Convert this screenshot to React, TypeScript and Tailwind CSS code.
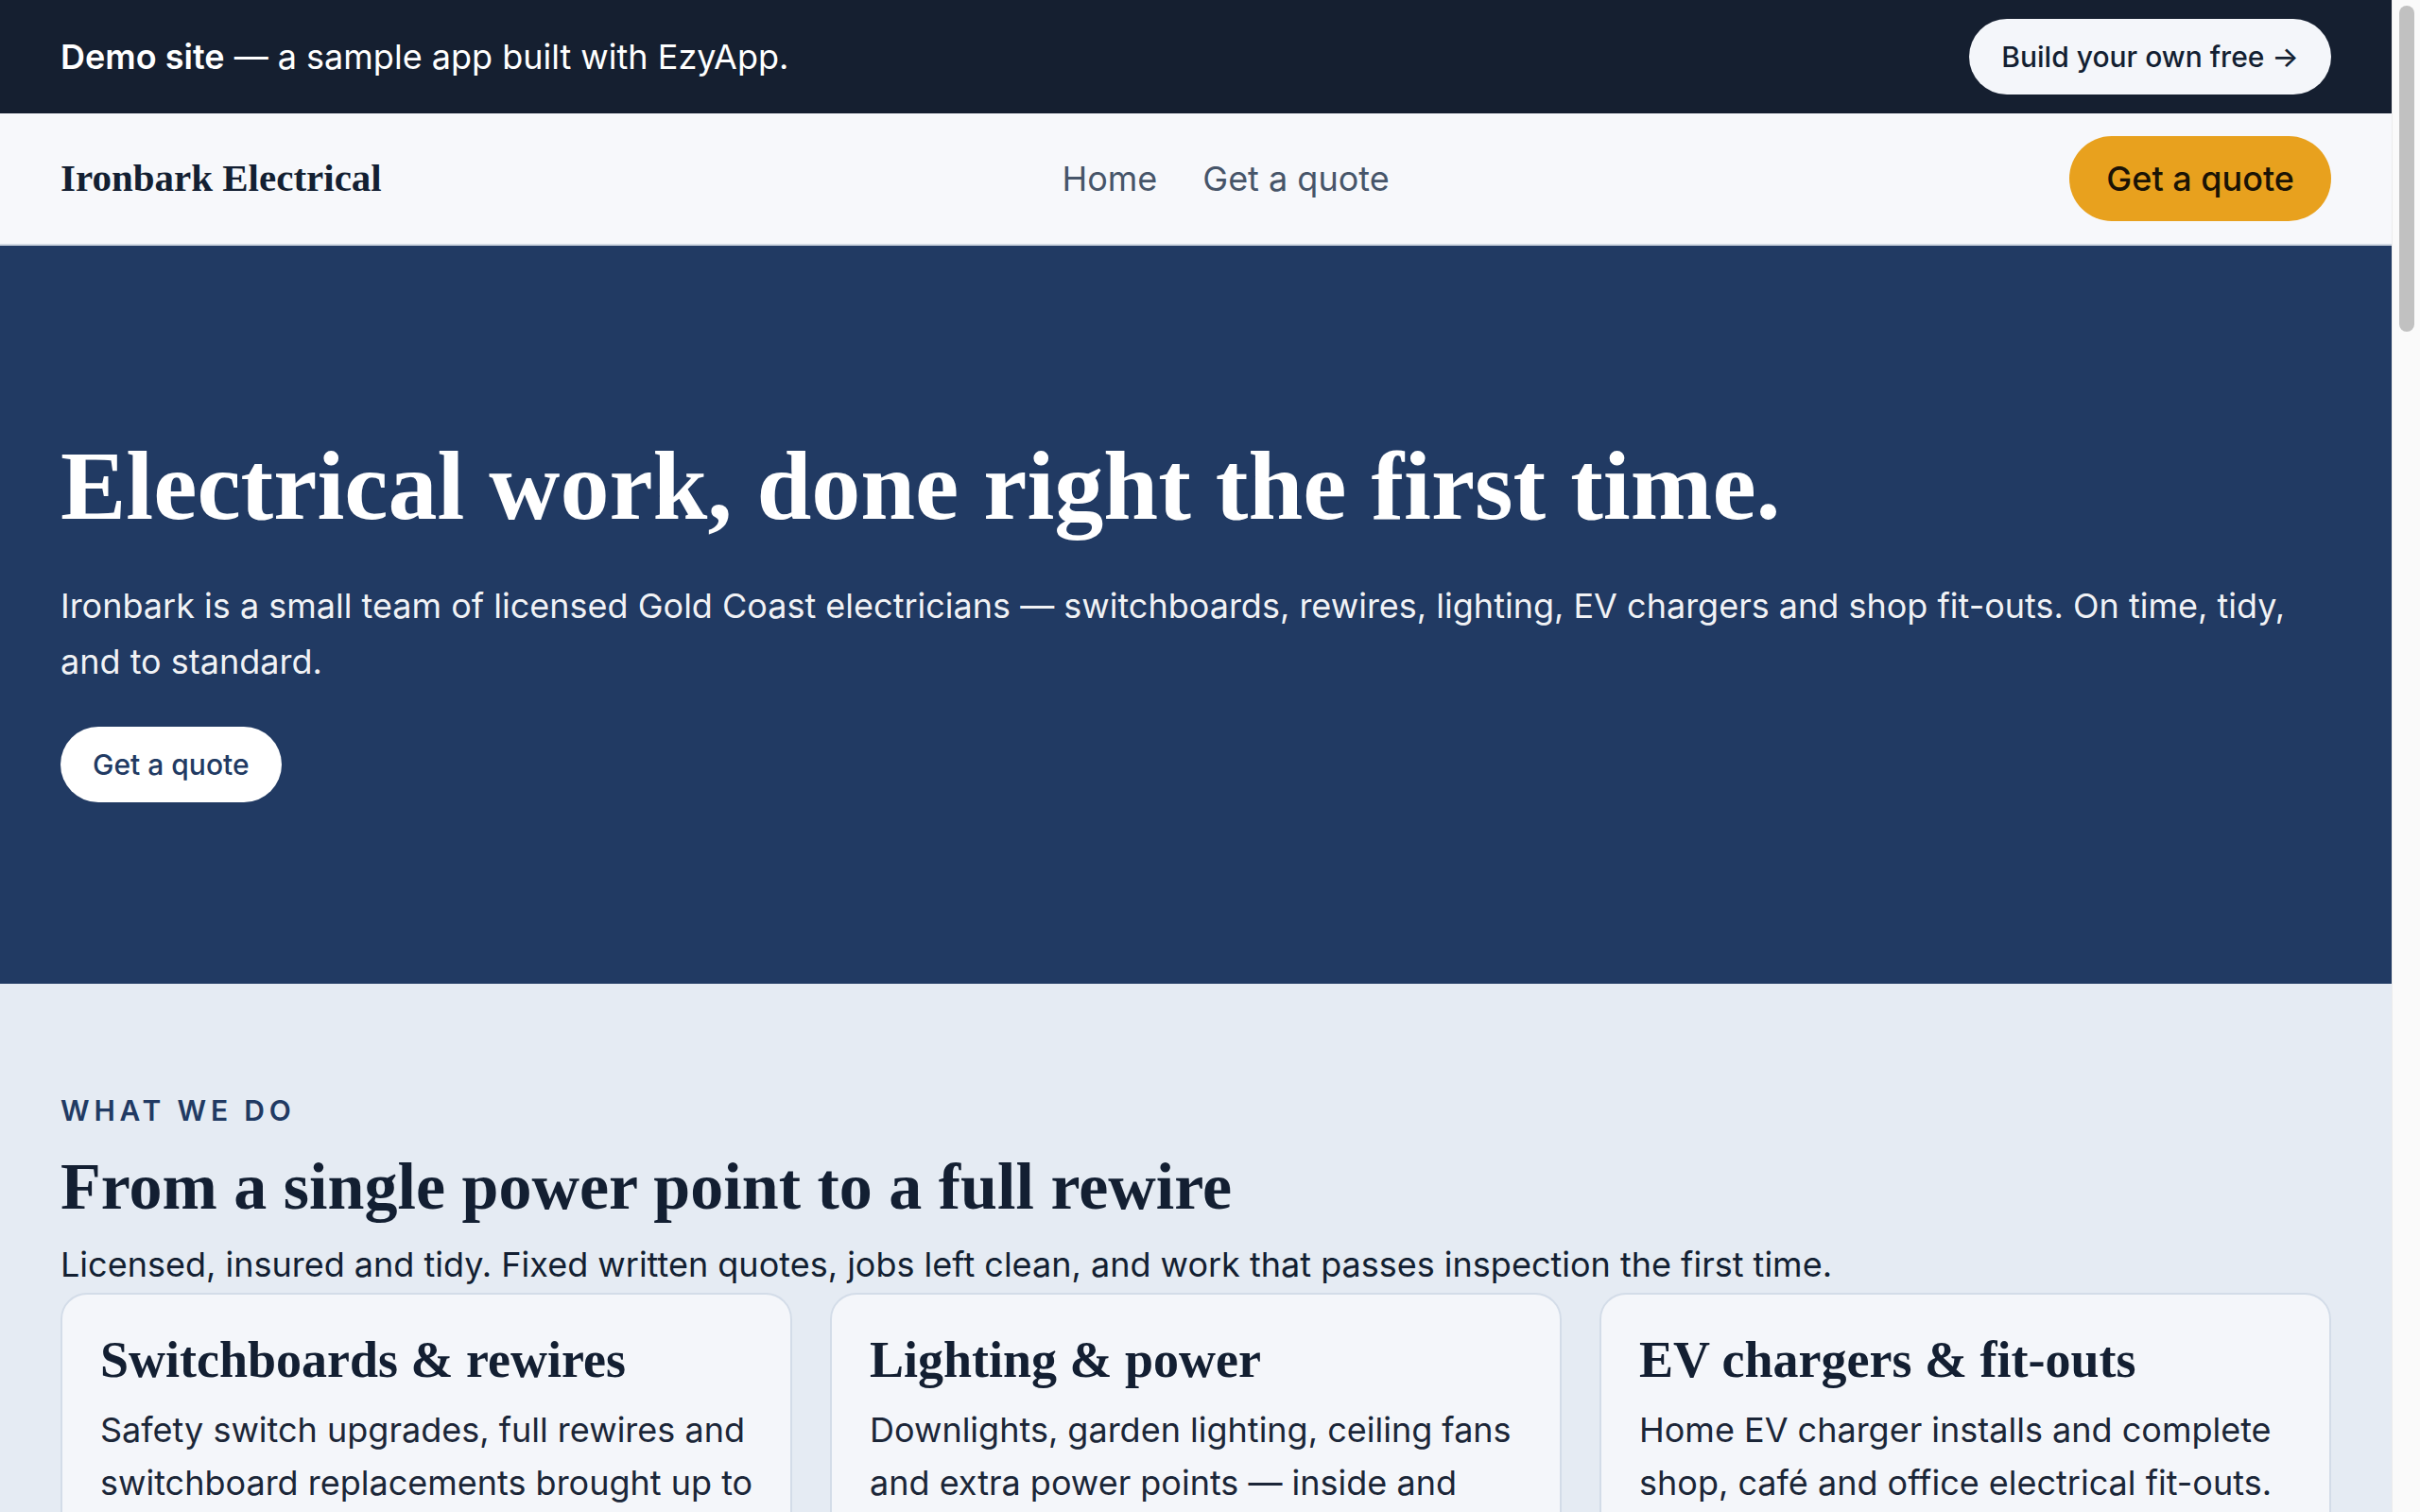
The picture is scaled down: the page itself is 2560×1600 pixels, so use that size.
import { ReactNode } from 'react'

const sans = "font-['Inter',sans-serif]"
const serif = "font-['Liberation_Serif',serif]"

const services = [
    {
        title: 'Switchboards & rewires',
        body: 'Safety switch upgrades, full rewires and switchboard replacements brought up to current Australian standards.',
    },
    {
        title: 'Lighting & power',
        body: 'Downlights, garden lighting, ceiling fans and extra power points — inside and out, neatly finished.',
    },
    {
        title: 'EV chargers & fit-outs',
        body: 'Home EV charger installs and complete shop, café and office electrical fit-outs.',
    },
]

const reasons = [
    { title: 'Fixed written quotes', body: 'You know the price before we start. No surprises on the invoice.' },
    { title: 'Licensed & insured', body: 'QLD electrical contractor licence and $20M public liability cover.' },
    { title: 'We turn up on time', body: 'A booked window, a text when we are on the way, and no no-shows.' },
    { title: 'Jobs left clean', body: 'Drop sheets down, offcuts gone, and everything tested before we leave.' },
]

const reviews = [
    { quote: 'Swapped our old ceramic fuses for a new board in a morning. Tidy, quick and explained everything.', name: 'Karen M., Burleigh Heads' },
    { quote: 'Fitted out our café in under two weeks and worked around our opening hours. Highly recommend.', name: 'Dom R., Palm Beach' },
    { quote: 'EV charger installed the day after the quote. Neat cable run and a fair price.', name: 'Sam T., Robina' },
]

const areas = ['Southport', 'Surfers Paradise', 'Broadbeach', 'Burleigh Heads', 'Palm Beach', 'Robina', 'Varsity Lakes', 'Nerang', 'Helensvale', 'Coomera', 'Currumbin', 'Coolangatta']

const faqs = [
    { q: 'Do you charge a call-out fee?', a: 'No. Quotes on the Gold Coast are free, and small jobs are priced up front.' },
    { q: 'How soon can you come out?', a: 'Most quotes are booked within two business days. Urgent safety issues are same-day where we can.' },
    { q: 'Do you work on commercial sites?', a: 'Yes — shops, cafés and offices, including after-hours work so you can keep trading.' },
    { q: 'Will I get a compliance certificate?', a: 'Every job is tested and you receive a certificate of testing and safety when we finish.' },
]

function Eyebrow({ children }: { children: ReactNode }) {
    return <p className="text-[30px] font-semibold uppercase tracking-[0.16em] text-[#213a63]">{children}</p>
}

function SectionHeading({ children }: { children: ReactNode }) {
    return <h2 className={`${serif} mt-4 text-[70px] font-bold leading-[1.2] text-[#131f32]`}>{children}</h2>
}

// window scrollbar, drawn since the page is captured without one
function Scrollbar() {
    return (
        <div className="fixed top-0 right-0 flex h-screen w-[30px] justify-center border-l border-[#ececec] bg-[#fafafa] pt-[6px]">
            <div className="h-[345px] w-4 rounded-full bg-[#c1c1c1]" />
        </div>
    )
}

export default function App() {
    return (
        <div className={`${sans} min-h-screen bg-[#e5ebf3] pr-[30px] text-[#131f32]`}>
            <Scrollbar />

            {/* demo banner */}
            <div className="flex h-[120px] items-center justify-between bg-[#151f30] px-16">
                <p className="text-[36px] text-white">
                    <span className="font-semibold">Demo site</span> — a sample app built with EzyApp.
                </p>
                <a href="#" className="flex h-20 items-center rounded-full bg-[#f4f6fa] px-[34px] text-[30px] font-medium text-[#131f32]">
                    Build your own free →
                </a>
            </div>

            {/* site header */}
            <header className="flex h-[140px] items-center justify-between border-b-2 border-[#d0d8e2] bg-[#f7f8fb] px-16">
                <span className={`${serif} text-[41px] font-bold text-[#131f32]`}>Ironbark Electrical</span>
                <nav className="flex items-center gap-12 text-[36px] text-[#475569]">
                    <a href="#">Home</a>
                    <a href="#">Get a quote</a>
                </nav>
                <a href="#" className="flex h-[90px] items-center rounded-full bg-[#e8a11e] px-[39px] text-[36px] font-medium text-[#1a1305]">
                    Get a quote
                </a>
            </header>

            {/* hero */}
            <section className="bg-[#213a63] px-16 pt-[197px] pb-48">
                <h1 className={`${serif} text-[104px] font-bold leading-[1.1] text-white`}>
                    Electrical work, done right the first time.
                </h1>
                <p className="mt-[41px] text-[36px] leading-[1.625] text-white/95">
                    Ironbark is a small team of licensed Gold Coast electricians — switchboards, rewires, lighting, EV chargers and shop fit-outs. On time, tidy, and to standard.
                </p>
                <a href="#" className="mt-10 inline-flex h-20 items-center rounded-full bg-white px-[34px] text-[30px] font-medium text-[#213a63]">
                    Get a quote
                </a>
            </section>

            {/* services */}
            <section className="px-16 pt-[112px] pb-28">
                <Eyebrow>What we do</Eyebrow>
                <SectionHeading>From a single power point to a full rewire</SectionHeading>
                <p className="mt-3 text-[36px] leading-[1.6] text-[#131f32]">
                    Licensed, insured and tidy. Fixed written quotes, jobs left clean, and work that passes inspection the first time.
                </p>
                <div className="grid grid-cols-3 gap-10">
                    {services.map(s => (
                        <div key={s.title} className="rounded-[28px] border-2 border-[#d3dce8] bg-[#f4f6fa] py-10 pr-[34px] pl-10">
                            <h3 className={`${serif} text-[54px] font-bold leading-[1.1] text-[#131f32]`}>{s.title}</h3>
                            <p className="mt-4 text-[36px] leading-[56px] text-[#1b2638]">{s.body}</p>
                        </div>
                    ))}
                </div>
            </section>

            {/* why us */}
            <section className="bg-[#f7f8fb] px-16 py-28">
                <Eyebrow>Why Ironbark</Eyebrow>
                <SectionHeading>Straightforward sparkies, no runaround</SectionHeading>
                <div className="mt-16 grid grid-cols-2 gap-10">
                    {reasons.map(r => (
                        <div key={r.title} className="rounded-[28px] border-2 border-[#d3dce8] bg-white p-10">
                            <h3 className={`${serif} text-[54px] font-bold leading-[1.1]`}>{r.title}</h3>
                            <p className="mt-4 text-[36px] leading-[56px] text-[#1b2638]">{r.body}</p>
                        </div>
                    ))}
                </div>
            </section>

            {/* reviews */}
            <section className="px-16 py-28">
                <Eyebrow>What customers say</Eyebrow>
                <SectionHeading>Trusted across the Gold Coast</SectionHeading>
                <div className="mt-16 grid grid-cols-3 gap-10">
                    {reviews.map(r => (
                        <figure key={r.name} className="rounded-[28px] border-2 border-[#d3dce8] bg-[#f4f6fa] p-10">
                            <p className="text-[40px] text-[#e8a11e]">★★★★★</p>
                            <blockquote className="mt-6 text-[36px] leading-[56px] text-[#1b2638]">“{r.quote}”</blockquote>
                            <figcaption className="mt-8 text-[30px] font-semibold text-[#213a63]">{r.name}</figcaption>
                        </figure>
                    ))}
                </div>
            </section>

            {/* service areas */}
            <section className="bg-[#f7f8fb] px-16 py-28">
                <Eyebrow>Where we work</Eyebrow>
                <SectionHeading>Servicing the whole Gold Coast</SectionHeading>
                <div className="mt-16 flex flex-wrap gap-6">
                    {areas.map(a => (
                        <span key={a} className="rounded-full border-2 border-[#d3dce8] bg-white px-10 py-5 text-[32px] text-[#1b2638]">{a}</span>
                    ))}
                </div>
            </section>

            {/* faq */}
            <section className="px-16 py-28">
                <Eyebrow>Questions</Eyebrow>
                <SectionHeading>Good to know</SectionHeading>
                <div className="mt-16 flex flex-col gap-8">
                    {faqs.map(f => (
                        <div key={f.q} className="rounded-[28px] border-2 border-[#d3dce8] bg-[#f4f6fa] p-10">
                            <h3 className={`${serif} text-[48px] font-bold`}>{f.q}</h3>
                            <p className="mt-4 text-[36px] leading-[56px] text-[#1b2638]">{f.a}</p>
                        </div>
                    ))}
                </div>
            </section>

            {/* call to action */}
            <section className="bg-[#213a63] px-16 py-40">
                <h2 className={`${serif} text-[80px] font-bold leading-[1.15] text-white`}>Need a sparky this week?</h2>
                <p className="mt-8 text-[36px] leading-[1.625] text-white/95">
                    Tell us about the job and we will get back to you with a fixed written quote within one business day.
                </p>
                <a href="#" className="mt-10 inline-flex h-[90px] items-center rounded-full bg-[#e8a11e] px-10 text-[36px] font-medium text-[#1a1305]">
                    Get a quote
                </a>
            </section>

            {/* footer */}
            <footer className="flex items-center justify-between bg-[#151f30] px-16 py-20 text-[30px] text-[#cbd5e1]">
                <div>
                    <p className={`${serif} text-[40px] font-bold text-white`}>Ironbark Electrical</p>
                    <p className="mt-3">Licensed electrical contractor · Gold Coast, QLD</p>
                </div>
                <p>© 2025 Ironbark Electrical</p>
            </footer>
        </div>
    )
}
